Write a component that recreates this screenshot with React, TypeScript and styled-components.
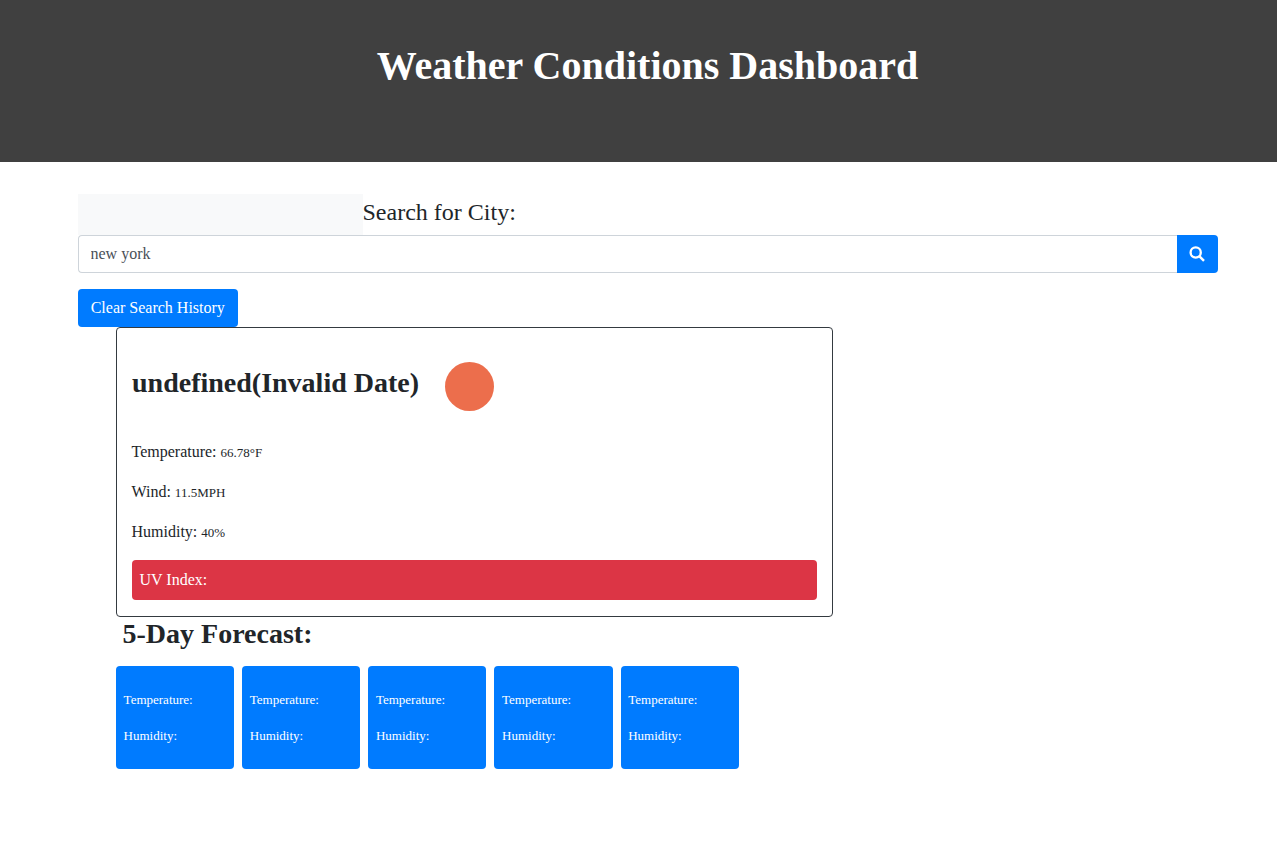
import React from "react";
import styled, { createGlobalStyle } from "styled-components";

const GlobalStyle = createGlobalStyle`
  *, *::before, *::after { box-sizing: border-box; }
  body {
    margin: 0;
    background: #fff;
    color: #212529;
    font: 400 16px/1.5 "Liberation Serif", "Times New Roman", serif;
  }
`;

const Header = styled.header`
  height: 162px;
  padding: 42px 0 0 18px;
  background: #404040;
  color: #fff;
  text-align: center;
`;

const Title = styled.h1`
  margin: 0;
  font-size: 40px;
  line-height: 48px;
  font-weight: 700;
`;

const Main = styled.main`
  width: 1140px;
  margin: 32px 0 0 78px;
`;

const SearchHeading = styled.div`
  display: flex;
  height: 41px;
`;

const HistoryPanel = styled.aside`
  width: 285px;
  background: #f8f9fa;
`;

const SearchLabel = styled.label`
  margin-left: -0.5px;
  font-size: 24px;
  line-height: 36px;
`;

const SearchGroup = styled.form`
  display: flex;
  height: 38px;
  margin-bottom: 16px;
`;

const SearchInput = styled.input`
  flex: 1;
  min-width: 0;
  padding: 6px 11.5px;
  border: 1px solid #ced4da;
  border-right: 0;
  border-radius: 4px 0 0 4px;
  color: #495057;
  font: inherit;
  outline: none;
`;

const SearchButton = styled.button`
  display: flex;
  align-items: center;
  justify-content: center;
  width: 41px;
  padding: 0 1px 0 0;
  border: 0;
  border-radius: 0 4px 4px 0;
  background: #007bff;
  color: #fff;
`;

const ClearButton = styled.button`
  display: block;
  width: 160px;
  height: 38px;
  padding: 0 0.5px 0 0;
  border: 0;
  border-radius: 4px;
  background: #007bff;
  color: #fff;
  font: inherit;
`;

const Results = styled.section`
  width: 717px;
  margin-left: 38px;
`;

const CurrentCard = styled.article`
  height: 290px;
  padding: 15px;
  border: 1px solid #343a40;
  border-radius: 4px;
`;

const CityRow = styled.div`
  display: flex;
  height: 97px;
`;

const City = styled.h2`
  width: 287px;
  margin: 23px 26px 0 0;
  font-size: 28px;
  line-height: 34px;
  font-weight: 700;
  white-space: nowrap;
`;

const Sun = styled.svg`
  width: 49px;
  height: 49px;
  margin-top: 19px;
`;

const Reading = styled.p`
  height: 24px;
  margin: 0 0 16px -0.5px;
`;

const Value = styled.span`
  font-size: 13px;
`;

const UvIndex = styled.div`
  height: 40px;
  padding: 8px 7.5px;
  border-radius: 4px;
  background: #dc3545;
  color: #fff;
`;

const ForecastTitle = styled.h2`
  margin: 0 0 15px 6.5px;
  font-size: 28px;
  line-height: 34px;
  font-weight: 700;
`;

const ForecastRow = styled.div`
  display: grid;
  grid-template-columns: repeat(5, 118.17px);
  column-gap: 8px;
`;

const ForecastCard = styled.article`
  height: 103px;
  padding: 24px 7.6px 0;
  border-radius: 4px;
  background: #007bff;
  color: #fff;
  font-size: 13px;
`;

const ForecastReading = styled.p`
  margin: 0 0 16px;
  line-height: 20px;
`;

const readings = [
  ["Temperature", "66.78°F"],
  ["Wind", "11.5MPH"],
  ["Humidity", "40%"],
];

export default function App() {
  return (
    <>
      <GlobalStyle />
      <Header>
        <Title>Weather Conditions Dashboard</Title>
      </Header>
      <Main>
        <SearchHeading>
          <HistoryPanel />
          <SearchLabel htmlFor="city">Search for City:</SearchLabel>
        </SearchHeading>
        <SearchGroup onSubmit={(e) => e.preventDefault()}>
          <SearchInput id="city" defaultValue="new york" />
          <SearchButton aria-label="Search">
            <svg width="16" height="16" viewBox="0 0 16 16" fill="none" stroke="currentColor">
              <circle cx="6.700" cy="6.500" r="5.100" strokeWidth="2.300" />
              <path d="M10.500 10.300 15 14.800" strokeWidth="2.500" />
            </svg>
          </SearchButton>
        </SearchGroup>
        <ClearButton>Clear Search History</ClearButton>
        <Results>
          <CurrentCard>
            <CityRow>
              <City>undefined(Invalid Date)</City>
              <Sun viewBox="0 0 49 49" aria-hidden="true">
                <circle cx="24.5" cy="24.5" r="24.5" fill="#ec6e4c" />
              </Sun>
            </CityRow>
            {readings.map(([name, value]) => (
              <Reading key={name}>
                {name}: <Value>{value}</Value>
              </Reading>
            ))}
            <UvIndex>UV Index:</UvIndex>
          </CurrentCard>
          <ForecastTitle>5-Day Forecast:</ForecastTitle>
          <ForecastRow>
            {[1, 2, 3, 4, 5].map((day) => (
              <ForecastCard key={day}>
                <ForecastReading>Temperature:</ForecastReading>
                <ForecastReading>Humidity:</ForecastReading>
              </ForecastCard>
            ))}
          </ForecastRow>
        </Results>
      </Main>
    </>
  );
}
